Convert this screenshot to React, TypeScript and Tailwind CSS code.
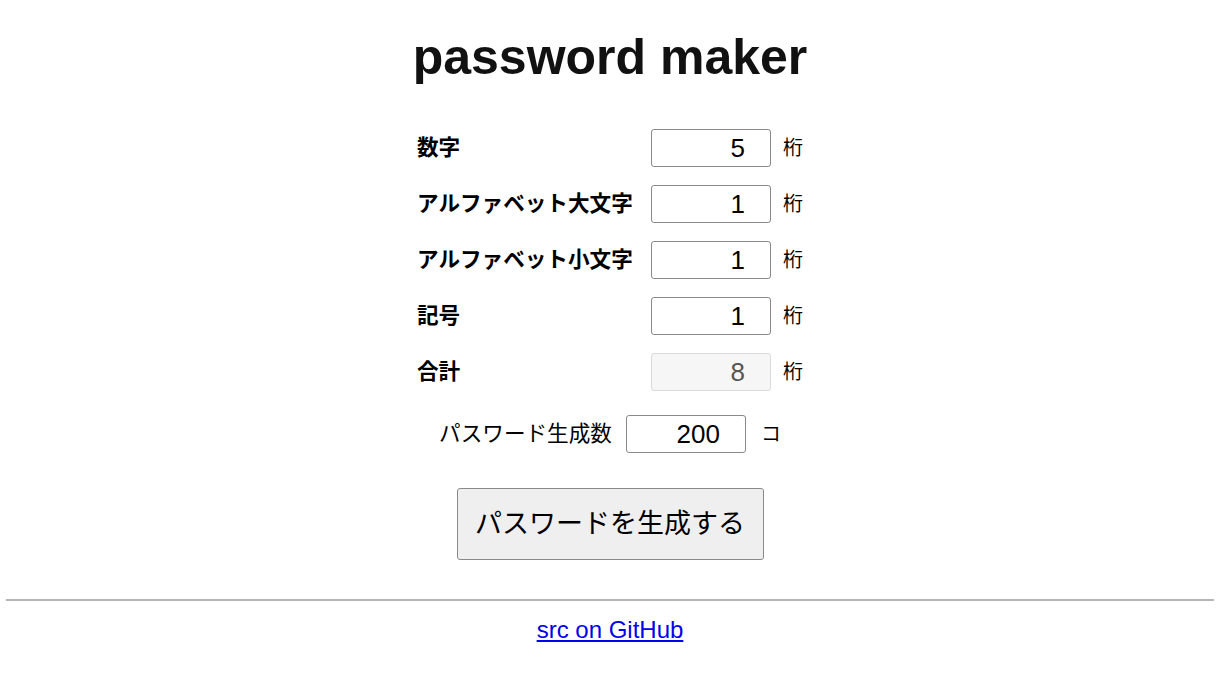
import { useState } from "react"

const font = { fontFamily: '"Liberation Sans", "Noto Sans CJK JP", sans-serif' }

interface Row {
  key: string
  label: string
}

const rows: Row[] = [
  { key: "num", label: "数字" },
  { key: "upper", label: "アルファベット大文字" },
  { key: "lower", label: "アルファベット小文字" },
  { key: "symbol", label: "記号" },
]

export default function App() {
  const [vals, setVals] = useState<Record<string, number>>({ num: 5, upper: 1, lower: 1, symbol: 1 })
  const [count, setCount] = useState(200)
  const total = Object.values(vals).reduce((a, b) => a + b, 0)

  const inputCls =
    "w-[120px] h-[38px] rounded-[3px] border border-[#8a8a8a] bg-white pr-[25px] text-right text-[26px] text-black outline-none [appearance:textfield] [&::-webkit-inner-spin-button]:appearance-none"

  return (
    <div className="min-h-screen bg-white text-black" style={font}>
      <div className="flex flex-col items-center">
        {/* Title */}
        <h1 className="mt-[27px] h-[60px] text-[50px] font-bold leading-[60px] text-[#111]">password maker</h1>

        {/* Character counts */}
        <div className="mt-[42px] grid grid-cols-[234px_120px_32px] gap-y-[18px]">
          {rows.map((r) => (
            <div key={r.key} className="contents">
              <div className="flex items-center text-[21.6px] font-bold leading-none">{r.label}</div>
              <input
                type="number"
                value={vals[r.key]}
                onChange={(e) => setVals({ ...vals, [r.key]: Number(e.target.value) })}
                className={inputCls}
              />
              <div className="flex items-center pl-3 text-[20px] leading-none">桁</div>
            </div>
          ))}
          <div className="flex items-center text-[21.6px] font-bold leading-none">合計</div>
          <input
            type="number"
            value={total}
            disabled
            className="w-[120px] h-[38px] rounded-[3px] border border-[#dadada] bg-[#f6f6f6] pr-[25px] text-right text-[26px] text-[#555] outline-none [appearance:textfield] [&::-webkit-inner-spin-button]:appearance-none"
          />
          <div className="flex items-center pl-3 text-[20px] leading-none">桁</div>
        </div>

        {/* Password count */}
        <div className="mt-[24px] flex items-center">
          <span className="text-[21.6px] leading-none">パスワード生成数</span>
          <input
            type="number"
            value={count}
            onChange={(e) => setCount(Number(e.target.value))}
            className="ml-[14px] w-[120px] h-[38px] rounded-[3px] border border-[#8a8a8a] bg-white pr-[25px] text-right text-[26px] text-black outline-none [appearance:textfield] [&::-webkit-inner-spin-button]:appearance-none"
          />
          <span className="ml-[15px] text-[20px] leading-none">コ</span>
        </div>

        <button className="mt-[35px] w-[307px] h-[72px] rounded-[3px] border border-[#8a8a8a] bg-[#efefef] text-[27px] text-black">
          パスワードを生成する
        </button>
      </div>

      <hr className="mx-[6px] mt-[39px] border-0 border-t-2 border-[#b5b5b5]" />

      <div className="mt-[14px] text-center">
        <a href="#" className="text-[24px] leading-[30px] text-[#0000ee] underline">
          src on GitHub
        </a>
      </div>
    </div>
  )
}
